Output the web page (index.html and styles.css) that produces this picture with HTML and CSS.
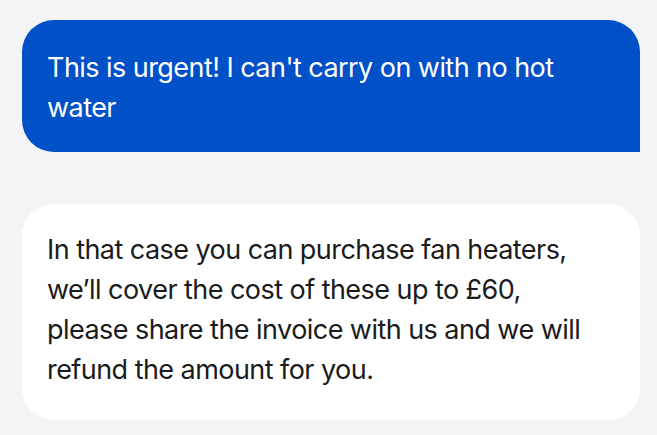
FILE: index.html
```html
<!DOCTYPE html>
<html>
<head>
  <title>Chat</title>
  <link rel="stylesheet" href="styles.css">
</head>
<body>
  <div class="chat">
    <div class="bubble sent">This is urgent! I can't carry on with no hot water</div>
    <div class="bubble received">In that case you can purchase fan heaters, we’ll cover the cost of these up to £60, please share the invoice with us and we will refund the amount for you.</div>
  </div>
</body>
</html>
```

FILE: styles.css
```css
body {
  margin: 0;
  background: #f3f4f6;
  font-family: Inter, "Noto Sans", sans-serif;
}

.chat {
  display: flex;
  flex-direction: column;
  gap: 52px;
  padding: 20px 17px 0 22px;
}

.bubble {
  font-size: 27px;
  line-height: 40px;
  letter-spacing: -0.55px;
  padding: 28px 40px 24px 25px;
}

.sent {
  background: #0050c7;
  color: #ffffff;
  border-radius: 32px 32px 0 32px;
}

.received {
  background: #ffffff;
  color: #1b1b1b;
  border-radius: 32px;
  padding-top: 26px;
  padding-bottom: 30px;
}
```
